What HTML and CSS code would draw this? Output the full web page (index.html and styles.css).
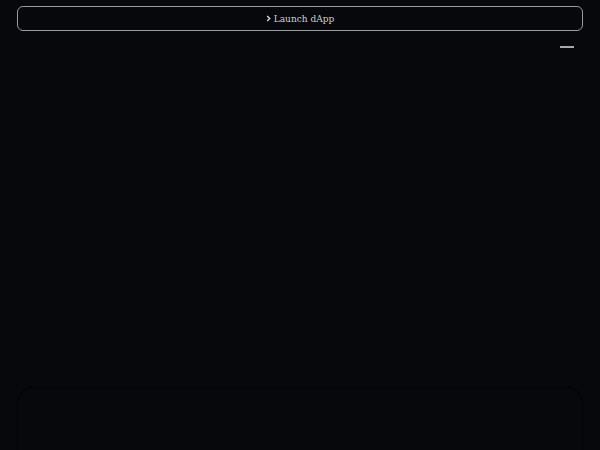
FILE: index.html
```html
<!DOCTYPE html>
<html>
<head>
<meta charset="utf-8">
<link rel="stylesheet" href="styles.css">
</head>
<body>
<div class="page">
  <a class="launch" href="#">
    <svg class="chev" width="5" height="7" viewBox="0 0 5 7"><path d="M1.2 1 L3.7 3.5 L1.2 6" fill="none" stroke="#d0d0d0" stroke-width="1.5"/></svg>
    <span>Launch dApp</span>
  </a>
  <div class="navrow">
    <button class="menu" aria-label="menu"><span class="bar"></span></button>
  </div>
  <div class="spacer"></div>
  <div class="card"></div>
</div>
</body>
</html>
```
FILE: styles.css
```css
html, body {
  margin: 0;
  padding: 0;
  background: #07080c;
  height: 100%;
  overflow: hidden;
}
.page {
  padding: 6px 17px 0 17px;
  display: flex;
  flex-direction: column;
  height: 100%;
  box-sizing: border-box;
}
.launch {
  display: flex;
  align-items: center;
  justify-content: center;
  gap: 3px;
  height: 25px;
  box-sizing: border-box;
  border: 1px solid #9a9a9e;
  border-radius: 6px;
  color: #d0d0d0;
  text-decoration: none;
  font-family: "DejaVu Serif", serif;
  font-size: 9px;
}
.chev { display: block; }
.navrow {
  display: flex;
  justify-content: flex-end;
  padding-right: 9px;
  margin-top: 15px;
}
.menu {
  background: none;
  border: none;
  padding: 0;
  width: 14px;
  height: 2px;
  display: flex;
}
.bar {
  display: block;
  width: 14px;
  height: 2px;
  background: #a8a8ac;
}
.spacer { height: 339px; flex: none; }
.card {
  flex: 1;
  border: 1px solid #020306;
  border-bottom: none;
  border-radius: 16px 16px 0 0;
  background: #07080c;
}
```
